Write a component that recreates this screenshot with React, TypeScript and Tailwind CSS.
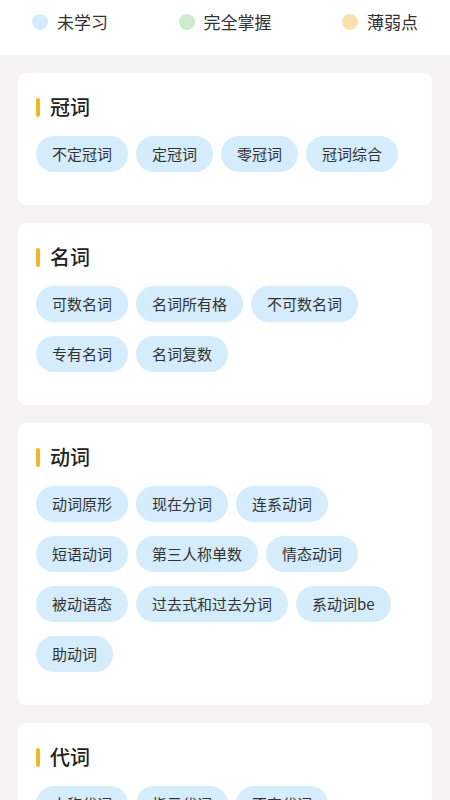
import React from 'react';

interface Section {
  title: string;
  items: string[];
}

const sections: Section[] = [
  { title: '冠词', items: ['不定冠词', '定冠词', '零冠词', '冠词综合'] },
  { title: '名词', items: ['可数名词', '名词所有格', '不可数名词', '专有名词', '名词复数'] },
  {
    title: '动词',
    items: [
      '动词原形',
      '现在分词',
      '连系动词',
      '短语动词',
      '第三人称单数',
      '情态动词',
      '被动语态',
      '过去式和过去分词',
      '系动词be',
      '助动词',
    ],
  },
  { title: '代词', items: ['人称代词', '指示代词', '不定代词', '物主代词', '反身代词'] },
];

const legend = [
  { label: '未学习', dot: 'bg-[#d3ebfb]' },
  { label: '完全掌握', dot: 'bg-[#cdeccd]' },
  { label: '薄弱点', dot: 'bg-[#fbe0b0]' },
];

function SectionCard({ section }: { section: Section }) {
  return (
    <div className="bg-white rounded-lg px-[18px] pt-[22px] pb-[33px]">
      <div className="flex items-center gap-[10px] h-6">
        <span className="w-1 h-[19px] rounded-full bg-[#f2b526]" />
        <h2 className="text-[20px] leading-6 font-medium text-[#222]">{section.title}</h2>
      </div>
      <div className="mt-[17px] flex flex-wrap gap-x-2 gap-y-[14px]">
        {section.items.map((item) => (
          <span
            key={item}
            className="h-9 px-4 rounded-full bg-[#d4ecfb] text-[15px] leading-9 text-[#333]"
          >
            {item}
          </span>
        ))}
      </div>
    </div>
  );
}

export default function App() {
  return (
    <div
      className="min-h-[800px] bg-[#f5f4f2]"
      style={{ fontFamily: '"Noto Sans CJK SC", "Noto Sans", sans-serif' }}
    >
      <div className="h-[55px] bg-white px-8 pt-[10px] flex justify-between items-start">
        {legend.map((l) => (
          <div key={l.label} className="flex items-center gap-[9px] h-6">
            <span className={`w-4 h-4 rounded-full ${l.dot}`} />
            <span className="text-[17px] leading-6 text-[#333]">{l.label}</span>
          </div>
        ))}
      </div>
      <div className="px-[18px] pt-[18px] flex flex-col gap-[18px]">
        {sections.map((s) => (
          <SectionCard key={s.title} section={s} />
        ))}
      </div>
    </div>
  );
}
